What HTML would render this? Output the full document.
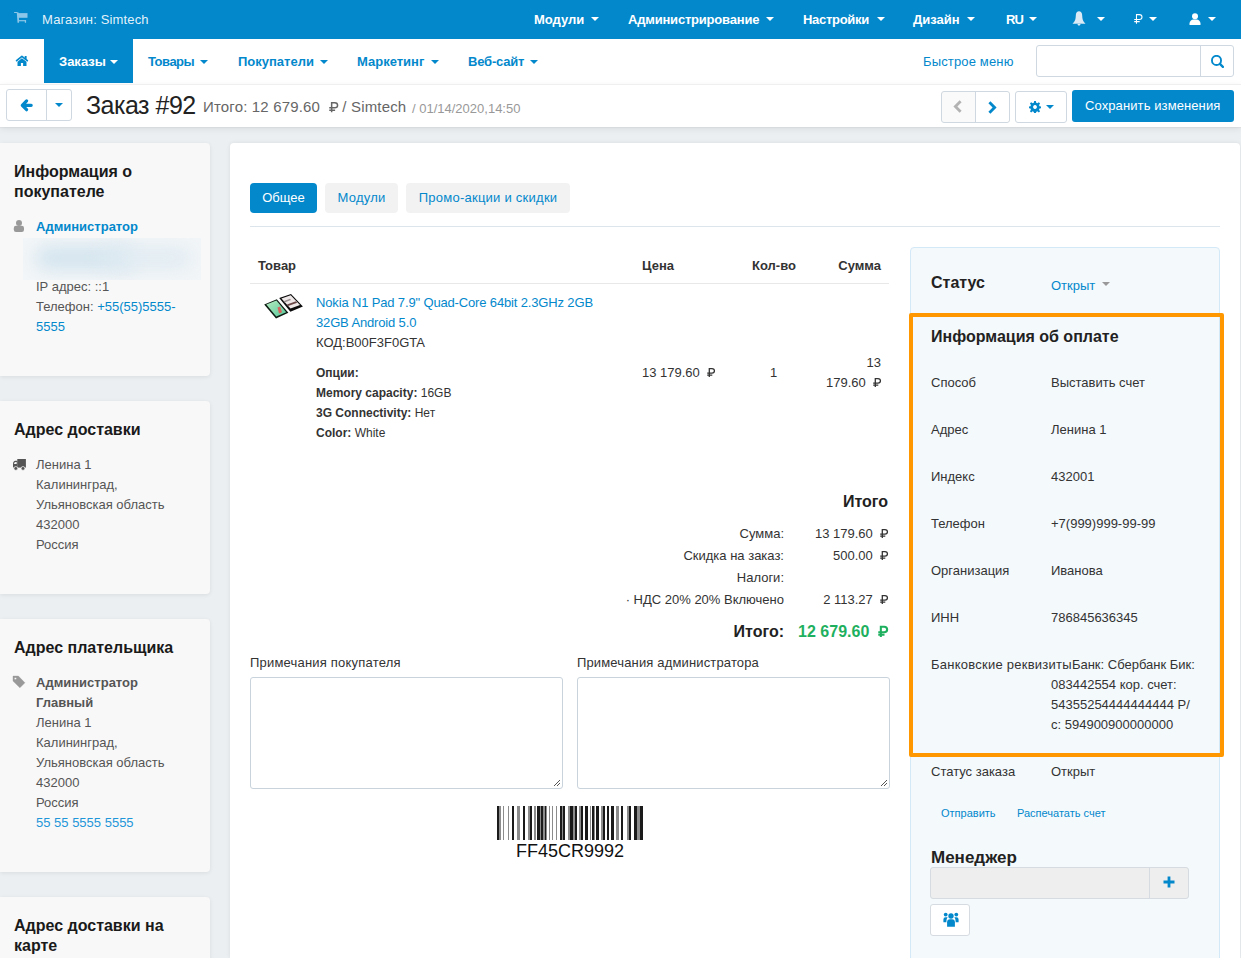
<!DOCTYPE html>
<html><head><meta charset="utf-8">
<style>
*{box-sizing:border-box;margin:0;padding:0}
html,body{width:1241px;height:958px;overflow:hidden}
body{font-family:"Liberation Sans",sans-serif;font-size:13px;line-height:20px;color:#333;background:#eceff2;position:relative}
.abs{position:absolute;white-space:nowrap}
a{color:#0388cc;text-decoration:none}
.caret{display:inline-block;width:0;height:0;border-left:4px solid transparent;border-right:4px solid transparent;border-top:4px solid currentColor;vertical-align:middle}
#top{position:absolute;left:0;top:0;width:1241px;height:39px;background:#0388cc;color:#fff}
#top .it{position:absolute;top:0;line-height:39px;font-weight:bold;color:#fff}

#nav{position:absolute;left:0;top:39px;width:1241px;height:45px;background:#fff}
#nav .it{position:absolute;top:1px;line-height:44px;font-weight:bold;color:#0388cc}
#tb{position:absolute;left:0;top:84px;width:1241px;height:43px;background:#fff;box-shadow:0 1px 1px rgba(0,0,0,.04),0 2px 7px rgba(0,0,0,.07)}
.btn{position:absolute;border:1px solid #cfd8e0;border-radius:3px;background:#fff}
.card{position:absolute;left:0;width:210px;background:#f8f8f8;border-radius:0 4px 4px 0;box-shadow:0 1px 4px rgba(0,0,0,.08)}
.card h3{position:absolute;left:14px;font-size:16px;line-height:20px;font-weight:bold;color:#1a1a1a;white-space:normal}
.card .txt{position:absolute;left:36px;line-height:20px;color:#555}
#main{position:absolute;left:230px;top:143px;width:1010px;height:815px;background:#fff;border-radius:4px 4px 0 0;box-shadow:0 0 4px rgba(0,0,0,.08)}
.rub{width:.615em;height:.69em;vertical-align:baseline;fill:none;stroke:currentColor;stroke-width:1.3;overflow:visible}
b .rub,.bold .rub{stroke-width:1.7}
</style></head><body>

<!-- TOP BAR -->
<div id="top">
  <svg class="abs" style="left:10px;top:8px" width="24" height="20" viewBox="10 8 24 20"><g fill="#8cc6e8"><rect x="14" y="11.9" width="3.6" height="1.2" rx=".5"/><polygon points="16.8,12.4 18.7,12.4 19.1,22.8 17.5,22.8"/><rect x="17.6" y="13.1" width="9.9" height="4.7"/><rect x="18" y="20.1" width="8" height="1.2"/><rect x="24.8" y="20.1" width="1.3" height="2.7"/></g></svg>
  <div class="abs" style="left:42px;top:0;line-height:39px;color:rgba(255,255,255,.9);font-weight:normal;letter-spacing:.15px">Магазин: Simtech</div>
  <div class="it" style="left:534px">Модули</div>
  <div class="it" style="left:628px;letter-spacing:-0.2px">Администрирование</div>
  <div class="it" style="left:803px;letter-spacing:-0.3px">Настройки</div>
  <div class="it" style="left:913px">Дизайн</div>
  <div class="it" style="left:1006px;letter-spacing:-1px">RU</div>
  <svg class="abs" style="left:1068px;top:8px" width="24" height="22" viewBox="1068 8 24 22"><path d="M1079 11.2C1077.2 11.2 1076 12.6 1075.9 14.5L1075.6 18C1075.3 20.5 1074.1 22 1072.5 23.8H1085.5C1083.9 22 1082.7 20.5 1082.4 18L1082.1 14.5C1082 12.6 1080.8 11.2 1079 11.2Z M1076.7 23.6H1081.3L1079 25.9Z" fill="#dbeaf5"/></svg>
  <div class="it" style="left:1134px;font-weight:normal;font-size:14px"><svg class="rub" style="stroke-width:1" viewBox="0 0 8 9"><path d="M2.3 9V0.55H5Q7.45 0.55 7.45 2.85Q7.45 5.1 5 5.1H0.2M0.2 7.1H5.3"/></svg></div>
  <div class="it" style="left:1189px"><svg width="12" height="12" viewBox="0 0 12 12" style="vertical-align:-1px"><circle cx="6" cy="3.2" r="3" fill="#fff"/><path d="M0.5 12v-1.5c0-2.3 1.8-4 4-4h3c2.2 0 4 1.7 4 4v1.5z" fill="#fff"/></svg></div>
  <span class="caret abs" style="left:591px;top:17px;color:#fff"></span><span class="caret abs" style="left:766px;top:17px;color:#fff"></span><span class="caret abs" style="left:877px;top:17px;color:#fff"></span><span class="caret abs" style="left:967px;top:17px;color:#fff"></span><span class="caret abs" style="left:1029px;top:17px;color:#fff"></span><span class="caret abs" style="left:1097px;top:17px;color:#fff"></span><span class="caret abs" style="left:1149px;top:17px;color:#fff"></span><span class="caret abs" style="left:1208px;top:17px;color:#fff"></span>
</div>


<!-- NAV BAR -->
<div id="nav">
  <svg class="abs" style="left:12px;top:11px" width="20" height="20" viewBox="12 50 20 20"><path d="M16.6 60.7L21.9 56.4L27.3 60.7" fill="none" stroke="#0388cc" stroke-width="1.7" stroke-linecap="round" stroke-linejoin="round"/><rect x="24.7" y="56" width="1.9" height="3.4" fill="#0388cc"/><path d="M17.5 61.7L21.9 58.2L26.5 61.7V66.1H23.1V63.1H20.9V66.1H17.5Z" fill="#0388cc"/></svg>
  <div class="abs" style="left:44px;top:0;width:89px;height:44px;background:#0388cc"></div>
  <div class="it" style="left:59px;color:#fff">Заказы</div>
  <div class="it" style="left:148px;letter-spacing:-0.5px">Товары</div>
  <div class="it" style="left:238px">Покупатели</div>
  <div class="it" style="left:357px">Маркетинг</div>
  <div class="it" style="left:468px;letter-spacing:-0.2px">Веб-сайт</div>
  <div class="abs" style="left:923px;top:1px;line-height:44px;color:#0388cc;letter-spacing:.15px">Быстрое меню</div>
  <div class="abs" style="left:1036px;top:6px;width:198px;height:32px;border:1px solid #cfd8e0;border-radius:3px;background:#fff"></div>
  <div class="abs" style="left:1200px;top:7px;width:1px;height:30px;background:#cfd8e0"></div>
  <svg class="abs" style="left:1211px;top:16px" width="13" height="13" viewBox="0 0 13 13"><circle cx="5.5" cy="5.4" r="4.55" fill="none" stroke="#0388cc" stroke-width="1.9"/><path d="M8.9 8.9l3 3" stroke="#0388cc" stroke-width="2.3" stroke-linecap="round"/></svg>
  <span class="caret abs" style="left:110px;top:21px;color:#fff"></span><span class="caret abs" style="left:200px;top:21px;color:#0388cc"></span><span class="caret abs" style="left:320px;top:21px;color:#0388cc"></span><span class="caret abs" style="left:431px;top:21px;color:#0388cc"></span><span class="caret abs" style="left:530px;top:21px;color:#0388cc"></span>
</div>

<!-- TOOLBAR -->
<div id="tb">
  <div class="btn" style="left:6px;top:5px;width:66px;height:32px"></div>
  <div class="abs" style="left:46px;top:6px;width:1px;height:30px;background:#cfd8e0"></div>
  <svg class="abs" style="left:18px;top:13px" width="17" height="17" viewBox="18 97 17 17"><path d="M26.6 100.9L22.3 105.3L26.6 109.7M22.5 105.3H31.2" fill="none" stroke="#0388cc" stroke-width="3.2" stroke-linecap="round" stroke-linejoin="round"/></svg>
  <span class="caret abs" style="left:55px;top:19px;color:#0388cc"></span>
  <div class="abs" style="left:86px;top:0;line-height:43px;font-size:25px;letter-spacing:-0.5px;color:#222">Заказ #92</div>
  <div class="abs" style="left:203px;top:1px;line-height:43px;font-size:15px;color:#666;letter-spacing:.17px">Итого: 12 679.60&nbsp;&nbsp;<svg class="rub" viewBox="0 0 8 9"><path d="M2.3 9V0.55H5Q7.45 0.55 7.45 2.85Q7.45 5.1 5 5.1H0.2M0.2 7.1H5.3"/></svg> / Simtech</div>
  <div class="abs" style="left:412px;top:3px;line-height:43px;font-size:13px;color:#999">/ 01/14/2020,14:50</div>

  <div class="btn" style="left:941px;top:7px;width:69px;height:32px;background:#fafafa"></div>
  <div class="abs" style="left:975px;top:8px;width:1px;height:30px;background:#cfd8e0;"></div>
  <div class="abs" style="left:976px;top:8px;width:33px;height:30px;background:#fff;border-radius:0 3px 3px 0"></div>
  <svg class="abs" style="left:953px;top:16px" width="9" height="13" viewBox="0 0 9 13"><path d="M6.6 0.3l2 2-4.2 4.2 4.2 4.2-2 2-6.2-6.2z" fill="#b3b3b3"/></svg>
  <svg class="abs" style="left:988px;top:16.5px" width="9" height="13" viewBox="0 0 9 13"><path d="M2.4 0.3l-2 2 4.2 4.2-4.2 4.2 2 2 6.2-6.2z" fill="#0388cc"/></svg>
  <div class="btn" style="left:1015px;top:7px;width:52px;height:32px"></div>
  <svg class="abs" style="left:1029px;top:16.8px" width="12" height="12" viewBox="0 0 14 14"><path d="M6 0h2l.4 2.1 1.3.6 1.8-1.2 1.4 1.4-1.2 1.8.6 1.3 2.1.4v2l-2.1.4-.6 1.3 1.2 1.8-1.4 1.4-1.8-1.2-1.3.6-.4 2.1h-2l-.4-2.1-1.3-.6-1.8 1.2-1.4-1.4 1.2-1.8-.6-1.3-2.1-.4v-2l2.1-.4.6-1.3-1.2-1.8 1.4-1.4 1.8 1.2 1.3-.6z M7 4.8a2.2 2.2 0 1 0 .01 0z" fill="#0388cc" fill-rule="evenodd"/></svg>
  <span class="caret abs" style="left:1046px;top:21px;color:#0388cc"></span>
  <div class="abs" style="left:1072px;top:6px;width:162px;height:32px;background:#0388cc;border-radius:3px;color:#fff;line-height:32px;padding-left:13px;letter-spacing:.1px">Сохранить изменения</div>
</div>

<div class="abs" style="left:0;top:84px;width:1241px;height:1px;background:#efefef"></div>
<!-- LEFT CARDS -->
<div class="card" style="top:143px;height:233px">
  <h3 style="top:19px;width:180px">Информация о покупателе</h3>
  <svg class="abs" style="left:13px;top:77px" width="12" height="12" viewBox="0 0 12 12"><circle cx="6" cy="3" r="3" fill="#999"/><rect x="0.8" y="5.8" width="10.2" height="6.1" rx="2.2" fill="#999"/></svg>
  <div class="txt" style="top:74px;font-weight:bold;color:#0388cc">Администратор</div>
  <div class="abs" style="left:23px;top:95px;width:178px;height:42px;overflow:hidden;background:#f3f6f8"><div style="position:absolute;left:12px;top:8px;width:100px;height:24px;background:#d3e4ee;filter:blur(9px);border-radius:12px"></div><div style="position:absolute;left:80px;top:9px;width:90px;height:22px;background:#e0ebf2;filter:blur(10px);border-radius:11px"></div></div>
  <div class="txt" style="top:134px">IP адрес: ::1</div>
  <div class="txt" style="top:154px;white-space:normal;width:160px">Телефон: <a>+55(55)5555-<br>5555</a></div>
</div>
<div class="card" style="top:401px;height:193px">
  <h3 style="top:19px">Адрес доставки</h3>
  <svg class="abs" style="left:8px;top:51px" width="24" height="24" viewBox="8 452 24 24"><rect x="17.3" y="459" width="8.6" height="8.6" fill="#555"/><path d="M17.5 460.8H15.4Q13 461 13 464V467.6H17.5Z" fill="#555"/><path d="M14 464Q14.2 462.1 15.6 462.1H16.7V464Z" fill="#f8f8f8"/><circle cx="15.8" cy="468.4" r="1.9" fill="#555" stroke="#f8f8f8" stroke-width=".7"/><circle cx="23" cy="468.4" r="1.9" fill="#555" stroke="#f8f8f8" stroke-width=".7"/></svg>
  <div class="txt" style="top:54px">Ленина 1<br>Калининград,<br>Ульяновская область<br>432000<br>Россия</div>
</div>
<div class="card" style="top:619px;height:253px">
  <h3 style="top:19px">Адрес плательщика</h3>
  <svg class="abs" style="left:6px;top:51px" width="24" height="24" viewBox="6 670 24 24"><path d="M13 676.1H18.4L24.9 682.8L19.9 687.8L13 681.1Z M15.4 677.4a1.1 1.1 0 1 0 .01 0Z" fill="#999" fill-rule="evenodd" stroke="#999" stroke-width=".4" stroke-linejoin="round"/></svg>
  <div class="txt" style="top:54px"><b>Администратор<br>Главный</b><br>Ленина 1<br>Калининград,<br>Ульяновская область<br>432000<br>Россия<br><a style="color:#1e96d8">55 55 5555 5555</a></div>
</div>
<div class="card" style="top:897px;height:100px">
  <h3 style="top:19px;width:180px">Адрес доставки на карте</h3>
</div>

<!-- MAIN -->
<div id="main"></div>
<div class="abs" style="left:250px;top:183px;width:67px;height:30px;background:#0388cc;border-radius:4px;color:#fff;line-height:30px;text-align:center">Общее</div>
<div class="abs" style="left:325px;top:183px;width:73px;height:30px;background:#f2f2f2;border-radius:4px;color:#0388cc;line-height:30px;text-align:center;letter-spacing:.2px">Модули</div>
<div class="abs" style="left:406px;top:183px;width:164px;height:30px;background:#f2f2f2;border-radius:4px;color:#0388cc;line-height:30px;text-align:center;letter-spacing:.25px">Промо-акции и скидки</div>
<div class="abs" style="left:250px;top:226px;width:970px;height:1px;background:#dde5ec"></div>

<!-- table -->
<div class="abs" style="left:258px;top:256px;font-weight:bold;color:#333">Товар</div>
<div class="abs" style="left:642px;top:256px;font-weight:bold;color:#333">Цена</div>
<div class="abs" style="left:752px;top:256px;font-weight:bold;color:#333">Кол-во</div>
<div class="abs" style="left:781px;top:256px;width:100px;text-align:right;font-weight:bold;color:#333">Сумма</div>
<div class="abs" style="left:250px;top:283px;width:639px;height:1px;background:#e8e8e8"></div>

<svg class="abs" style="left:258px;top:286px;filter:blur(0.35px)" width="52" height="34" viewBox="258 286 52 34">
  <defs><linearGradient id="gg" x1="0" y1="0" x2="1" y2="1"><stop offset="0" stop-color="#b5ecc0"/><stop offset="1" stop-color="#57c79a"/></linearGradient></defs>
  <polygon points="264.2,304.4 276.8,299.2 288.4,312.8 276,318.5" fill="#0d1a12"/>
  <polygon points="266.3,304.6 276.4,300.5 286.2,312.3 276.3,316.6" fill="url(#gg)"/>
  <polygon points="277.5,307.5 280.2,306.6 282,312.2 279,313.6" fill="#d9645f"/>
  <polygon points="279.2,298 291,293.9 302.9,306.6 290.4,311.8" fill="#0b0b0b"/>
  <polygon points="281.4,298.5 290.7,295.2 300,305 290.5,308.6" fill="#efe9ea"/>
  <polygon points="283.5,301.2 290,298.8 291,300 284.5,302.4" fill="#9a8f90"/>
  <polygon points="287,304.5 296,301.3 297.2,302.7 288.2,306" fill="#6b4848"/>
</svg>
<div class="abs" style="left:316px;top:293px;color:#0388cc;letter-spacing:-.15px">Nokia N1 Pad 7.9" Quad-Core 64bit 2.3GHz 2GB<br>32GB Android 5.0</div>
<div class="abs" style="left:316px;top:333px;color:#333">КОД:B00F3F0GTA</div>
<div class="abs" style="left:316px;top:363px;font-size:12px;color:#333"><b>Опции:</b><br><b>Memory capacity:</b> 16GB<br><b>3G Connectivity:</b> Нет<br><b>Color:</b> White</div>
<div class="abs" style="left:642px;top:363px;color:#333">13 179.60&nbsp;&nbsp;<svg class="rub" viewBox="0 0 8 9"><path d="M2.3 9V0.55H5Q7.45 0.55 7.45 2.85Q7.45 5.1 5 5.1H0.2M0.2 7.1H5.3"/></svg></div>
<div class="abs" style="left:770px;top:363px;color:#333">1</div>
<div class="abs" style="left:781px;top:353px;width:100px;text-align:right;color:#333">13<br>179.60&nbsp;&nbsp;<svg class="rub" viewBox="0 0 8 9"><path d="M2.3 9V0.55H5Q7.45 0.55 7.45 2.85Q7.45 5.1 5 5.1H0.2M0.2 7.1H5.3"/></svg></div>

<!-- totals -->
<div class="abs" style="left:788px;top:492px;width:100px;text-align:right;font-size:16px;font-weight:bold;color:#222">Итого</div>
<div class="abs" style="left:584px;top:523px;width:200px;text-align:right;color:#333;line-height:22px">Сумма:<br>Скидка на заказ:<br>Налоги:<br>· НДС 20% 20% Включено</div>
<div class="abs" style="left:788px;top:523px;width:100px;text-align:right;color:#333;line-height:22px">13 179.60&nbsp;&nbsp;<svg class="rub" viewBox="0 0 8 9"><path d="M2.3 9V0.55H5Q7.45 0.55 7.45 2.85Q7.45 5.1 5 5.1H0.2M0.2 7.1H5.3"/></svg><br>500.00&nbsp;&nbsp;<svg class="rub" viewBox="0 0 8 9"><path d="M2.3 9V0.55H5Q7.45 0.55 7.45 2.85Q7.45 5.1 5 5.1H0.2M0.2 7.1H5.3"/></svg><br>&nbsp;<br>2 113.27&nbsp;&nbsp;<svg class="rub" viewBox="0 0 8 9"><path d="M2.3 9V0.55H5Q7.45 0.55 7.45 2.85Q7.45 5.1 5 5.1H0.2M0.2 7.1H5.3"/></svg></div>
<div class="abs" style="left:684px;top:622px;width:100px;text-align:right;font-size:16px;font-weight:bold;color:#222">Итого:</div>
<div class="abs bold" style="left:768px;top:622px;width:120px;text-align:right;font-size:16px;font-weight:bold;color:#1fb05f">12 679.60&nbsp;&nbsp;<svg class="rub" viewBox="0 0 8 9"><path d="M2.3 9V0.55H5Q7.45 0.55 7.45 2.85Q7.45 5.1 5 5.1H0.2M0.2 7.1H5.3"/></svg></div>

<!-- notes -->
<div class="abs" style="left:250px;top:653px;color:#333;letter-spacing:.2px">Примечания покупателя</div>
<div class="abs" style="left:577px;top:653px;color:#333;letter-spacing:.15px">Примечания администратора</div>
<div class="abs ta" style="left:250px;top:677px;width:313px;height:112px;border:1px solid #c9d3dc;border-radius:3px;background:#fff"></div>
<div class="abs ta" style="left:577px;top:677px;width:313px;height:112px;border:1px solid #c9d3dc;border-radius:3px;background:#fff"></div>
<svg class="abs" style="left:553px;top:779px" width="8" height="8" viewBox="0 0 8 8"><path d="M7 1L1 7M7 4L4 7" stroke="#555" stroke-width="1"/></svg>
<svg class="abs" style="left:880px;top:779px" width="8" height="8" viewBox="0 0 8 8"><path d="M7 1L1 7M7 4L4 7" stroke="#555" stroke-width="1"/></svg>

<!-- barcode -->
<svg class="abs" style="left:495px;top:806px" width="150" height="34" viewBox="0 0 150 34"><rect x="2" y="0" width="2" height="34" fill="#1a1a1a"/><rect x="4" y="0" width="2" height="34" fill="#8c8c8c"/><rect x="8" y="0" width="1" height="34" fill="#8c8c8c"/><rect x="13" y="0" width="1" height="34" fill="#8c8c8c"/><rect x="17" y="0" width="2" height="34" fill="#1a1a1a"/><rect x="22" y="0" width="3" height="34" fill="#8c8c8c"/><rect x="28" y="0" width="2" height="34" fill="#1a1a1a"/><rect x="33" y="0" width="2" height="34" fill="#8c8c8c"/><rect x="35" y="0" width="2" height="34" fill="#1a1a1a"/><rect x="39" y="0" width="2" height="34" fill="#8c8c8c"/><rect x="42" y="0" width="3" height="34" fill="#1a1a1a"/><rect x="45" y="0" width="1" height="34" fill="#8c8c8c"/><rect x="46" y="0" width="2" height="34" fill="#1a1a1a"/><rect x="48" y="0" width="2" height="34" fill="#8c8c8c"/><rect x="50" y="0" width="1" height="34" fill="#1a1a1a"/><rect x="51" y="0" width="1" height="34" fill="#8c8c8c"/><rect x="54" y="0" width="1" height="34" fill="#8c8c8c"/><rect x="57" y="0" width="1" height="34" fill="#8c8c8c"/><rect x="61" y="0" width="1" height="34" fill="#8c8c8c"/><rect x="65" y="0" width="2" height="34" fill="#1a1a1a"/><rect x="67" y="0" width="1" height="34" fill="#8c8c8c"/><rect x="68" y="0" width="2" height="34" fill="#1a1a1a"/><rect x="73" y="0" width="2" height="34" fill="#8c8c8c"/><rect x="75" y="0" width="3" height="34" fill="#1a1a1a"/><rect x="78" y="0" width="2" height="34" fill="#8c8c8c"/><rect x="80" y="0" width="2" height="34" fill="#1a1a1a"/><rect x="84" y="0" width="2" height="34" fill="#8c8c8c"/><rect x="86" y="0" width="2" height="34" fill="#1a1a1a"/><rect x="90" y="0" width="3" height="34" fill="#1a1a1a"/><rect x="95" y="0" width="1" height="34" fill="#8c8c8c"/><rect x="97" y="0" width="2" height="34" fill="#1a1a1a"/><rect x="99" y="0" width="1" height="34" fill="#8c8c8c"/><rect x="101" y="0" width="3" height="34" fill="#1a1a1a"/><rect x="106" y="0" width="2" height="34" fill="#8c8c8c"/><rect x="108" y="0" width="2" height="34" fill="#1a1a1a"/><rect x="112" y="0" width="2" height="34" fill="#1a1a1a"/><rect x="116" y="0" width="3" height="34" fill="#1a1a1a"/><rect x="121" y="0" width="3" height="34" fill="#8c8c8c"/><rect x="126" y="0" width="2" height="34" fill="#1a1a1a"/><rect x="132" y="0" width="2" height="34" fill="#8c8c8c"/><rect x="134" y="0" width="2" height="34" fill="#1a1a1a"/><rect x="139" y="0" width="3" height="34" fill="#1a1a1a"/><rect x="142" y="0" width="3" height="34" fill="#8c8c8c"/><rect x="145" y="0" width="3" height="34" fill="#1a1a1a"/></svg>
<div class="abs" style="left:470px;top:841px;width:200px;text-align:center;font-size:18px;color:#111">FF45CR9992</div>

<!-- RIGHT SIDEBAR -->
<div class="abs" style="left:910px;top:247px;width:310px;height:720px;background:#f4f9fc;border:1px solid #d4e9f7;border-radius:4px"></div>
<div class="abs" style="left:931px;top:273px;font-size:16px;font-weight:bold;color:#222">Статус</div>
<div class="abs" style="left:1051px;top:276px;color:#0388cc">Открыт</div><span class="caret abs" style="left:1102px;top:282px;color:#999"></span>
<div class="abs" style="left:909px;top:313px;width:315px;height:444px;border:4px solid #ff9800;border-radius:2px"></div>
<div class="abs" style="left:931px;top:327px;font-size:16px;font-weight:bold;color:#222">Информация об оплате</div>
<div class="abs" style="left:931px;top:372px;color:#333;line-height:47px;margin-top:-13px">Способ<br>Адрес<br>Индекс<br>Телефон<br>Организация<br>ИНН</div>
<div class="abs" style="left:1051px;top:372px;color:#333;line-height:47px;margin-top:-13px">Выставить счет<br>Ленина 1<br>432001<br>+7(999)999-99-99<br>Иванова<br>786845636345</div>
<div class="abs" style="left:931px;top:655px;color:#333"><span style="letter-spacing:.25px">Банковские реквизиты</span>Банк: Сбербанк Бик:</div>
<div class="abs" style="left:1051px;top:675px;color:#333">083442554 кор. счет:<br>54355254444444444 Р/<br>с: 594900900000000</div>
<div class="abs" style="left:931px;top:762px;color:#333">Статус заказа</div>
<div class="abs" style="left:1051px;top:762px;color:#333">Открыт</div>
<div class="abs" style="left:941px;top:803px;font-size:11px;color:#0388cc">Отправить</div>
<div class="abs" style="left:1017px;top:803px;font-size:11px;color:#0388cc">Распечатать счет</div>
<div class="abs" style="left:931px;top:848px;font-size:17px;font-weight:bold;color:#222">Менеджер</div>
<div class="abs" style="left:930px;top:867px;width:259px;height:32px;background:#eee;border:1px solid #d5dbe0;border-radius:3px"></div>
<div class="abs" style="left:1149px;top:868px;width:1px;height:30px;background:#d5dbe0"></div>
<svg class="abs" style="left:1163px;top:875.5px" width="12" height="12" viewBox="0 0 12 12"><path d="M4.6 0.5h2.8v4.1h4.1v2.8h-4.1v4.1h-2.8v-4.1h-4.1v-2.8h4.1z" fill="#0388cc"/></svg>
<div class="abs" style="left:930px;top:904px;width:40px;height:32px;background:#fff;border:1px solid #d5dbe0;border-radius:3px"></div>
<svg class="abs" style="left:942px;top:911px" width="18" height="17" viewBox="942 911 18 17"><g fill="#0388cc"><circle cx="951" cy="916" r="2.7"/><circle cx="945.7" cy="914.6" r="1.9"/><circle cx="956.3" cy="914.6" r="1.9"/><path d="M947.1 926.8V922.3Q947.1 919.3 950 919.3H952Q954.9 919.3 954.9 922.3V926.8Z"/><path d="M943.4 922.3V919.4Q943.4 917.2 945.6 917.2H947.6Q946.4 918.6 946.4 921.2V922.3Z"/><path d="M958.6 922.3V919.4Q958.6 917.2 956.4 917.2H954.4Q955.6 918.6 955.6 921.2V922.3Z"/></g></svg>
</body></html>
